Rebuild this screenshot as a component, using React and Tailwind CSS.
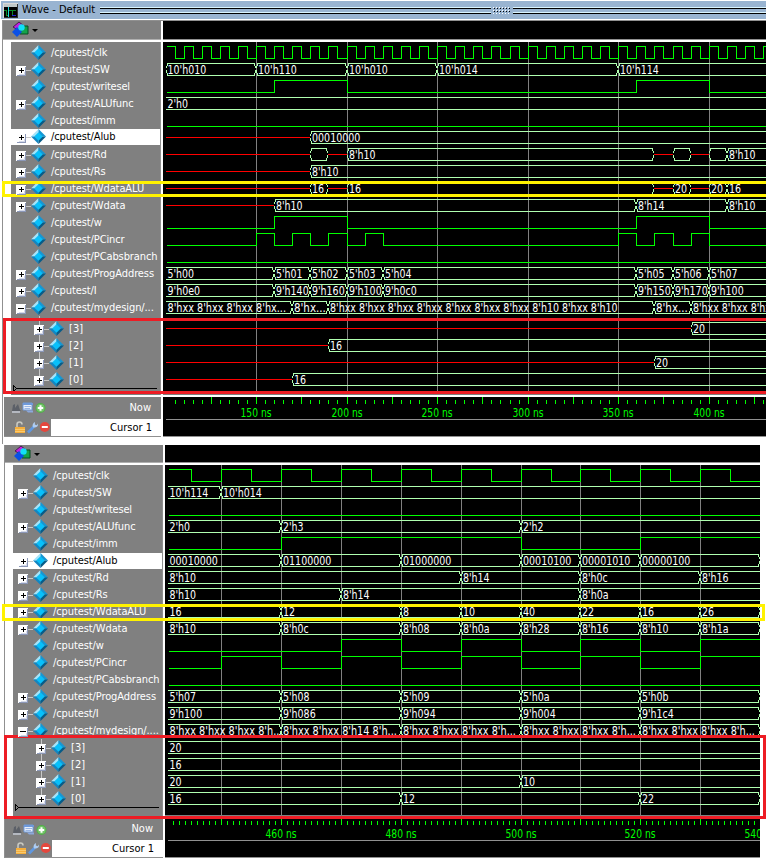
import React from "react";

const FONT = "font-['DejaVu_Sans_Condensed','DejaVu_Sans',sans-serif]";
const BUS = "#b0ffb0";
const GREEN = "#00ff00";

const CHAR_WIDTHS = { "'": 2.4, " ": 3.2, ".": 3.9, x: 5.6, c: 5.2 };
const textWidth = (s) => [...s].reduce((w, ch) => w + (CHAR_WIDTHS[ch] ?? 6.05), 0);

const XX = "8'hxx ";

// Segment kinds: bit levels [time, 0|1]; bus values [time, label], "x" = unknown, "" = no label.
const FIRST = {
  x: (t) => Math.round(256 + (t - 150) * 1.811),
  left: 166, right: 766, start: 100, end: 440,
  grid: [150, 200, 250, 300, 350, 400],
  rows: [
    { y: 52, clk: true },
    { y: 69, bus: [[100.5, "10'h010"], [150, "10'h110"], [200, "10'h010"], [250, "10'h014"], [350, "10'h114"]] },
    { y: 86, bit: [[100, 0], [160, 1], [200, 0], [360, 1], [400, 0]] },
    { y: 103, bus: [[100, "2'h0"]] },
    { y: 120, bit: [[100, 0]] },
    { y: 137, bus: [[100, "x"], [180, "00010000"]] },
    { y: 154, bus: [[100, "x"], [180, ""], [190, "x"], [200, "8'h10"], [370, "x"], [380, ""], [390, "x"], [400, ""], [410, "8'h10"]] },
    { y: 171, bus: [[100, "x"], [180, "8'h10"]] },
    { y: 188, bus: [[100, "x"], [180, "16"], [190, "x"], [200, "16"], [370, "x"], [380, "20"], [390, "x"], [400, "20"], [410, "16"]] },
    { y: 205, bus: [[100, "x"], [160, "8'h10"], [360, "8'h14"], [410, "8'h10"]] },
    { y: 222, bit: [[100, 0], [160, 1], [200, 0], [360, 1], [400, 0]] },
    { y: 239, bit: [[100, 0], [150, 1], [160, 0], [170, 1], [180, 0], [190, 1], [200, 0], [210, 1], [220, 0], [350, 1], [360, 0], [370, 1], [380, 0], [390, 1], [400, 0]] },
    { y: 256, bit: [[100, 0]] },
    { y: 273, bus: [[100, "5'h00"], [160, "5'h01"], [180, "5'h02"], [200, "5'h03"], [220, "5'h04"], [360, "5'h05"], [380, "5'h06"], [400, "5'h07"]] },
    { y: 290, bus: [[100, "9'h0e0"], [160, "9'h140"], [180, "9'h160"], [200, "9'h100"], [220, "9'h0c0"], [360, "9'h150"], [380, "9'h170"], [400, "9'h100"]] },
    { y: 307, bus: [[100, XX.repeat(3) + "8'hx..."], [170, "8'hx..."], [190, XX.repeat(7) + "8'h10 8'hxx 8'h10"], [370, "8'hx..."], [390, XX.repeat(3)]] },
    { y: 328, bus: [[100, "x"], [390, "20"]] },
    { y: 345, bus: [[100, "x"], [190, "16"]] },
    { y: 362, bus: [[100, "x"], [370, "20"]] },
    { y: 379, bus: [[100, "x"], [170, "16"]] },
  ],
};

const SECOND = {
  x: (t) => Math.round(281.2 + (t - 460) * 5.985),
  left: 168, right: 760, start: 441, end: 540,
  grid: [450, 460, 470, 480, 490, 500, 510, 520, 530],
  rows: [
    { y: 475, clk: true },
    { y: 492, bus: [[441, "10'h114"], [450, "10'h014"]] },
    { y: 509, bit: [[441, 0]] },
    { y: 526, bus: [[441, "2'h0"], [460, "2'h3"], [500, "2'h2"]] },
    { y: 543, bit: [[441, 0], [460, 1], [500, 0], [520, 1]] },
    { y: 560, closed: true, bus: [[441, "00010000"], [460, "01100000"], [480, "01000000"], [500, "00010100"], [510, "00001010"], [520, "00000100"]] },
    { y: 577, bus: [[441, "8'h10"], [490, "8'h14"], [510, "8'h0c"], [530, "8'h16"]] },
    { y: 594, bus: [[441, "8'h10"], [470, "8'h14"], [510, "8'h0a"]] },
    { y: 611, closed: true, bus: [[441, "16"], [460, "12"], [480, "8"], [490, "10"], [500, "40"], [510, "22"], [520, "16"], [530, "26"]] },
    { y: 628, closed: true, bus: [[441, "8'h10"], [460, "8'h0c"], [480, "8'h08"], [490, "8'h0a"], [500, "8'h28"], [510, "8'h16"], [520, "8'h10"], [530, "8'h1a"]] },
    { y: 645, bit: [[441, 0], [470, 1], [480, 0], [490, 1], [500, 0], [510, 1], [520, 0], [530, 1]] },
    { y: 662, bit: [[441, 0], [450, 1], [460, 0], [470, 1], [480, 0], [490, 1], [500, 0], [510, 1], [520, 0], [530, 1]] },
    { y: 679, bit: [[441, 0]] },
    { y: 696, closed: true, bus: [[441, "5'h07"], [460, "5'h08"], [480, "5'h09"], [500, "5'h0a"], [520, "5'h0b"]] },
    { y: 713, closed: true, bus: [[441, "9'h100"], [460, "9'h086"], [480, "9'h094"], [500, "9'h004"], [520, "9'h1c4"]] },
    { y: 730, closed: true, bus: [[441, XX.repeat(3) + "8'h..."], [460, XX.repeat(2) + "8'h14 8'h..."], [480, XX.repeat(3) + "8'h..."], [500, XX.repeat(3) + "8'h..."], [520, XX.repeat(3) + "8'h..."]] },
    { y: 747, bus: [[441, "20"]] },
    { y: 764, bus: [[441, "16"]] },
    { y: 781, bus: [[441, "20"], [500, "10"]] },
    { y: 798, closed: true, bus: [[441, "16"], [480, "12"], [520, "22"]] },
  ],
};

function bitPath(cfg, y, levels) {
  let d = "";
  levels.forEach(([t, v], i) => {
    const px = i === 0 ? cfg.left + 1 : cfg.x(t) + 0.5;
    const py = y + 0.5 + (v ? -6 : 6);
    d += i === 0 ? `M${px} ${py}` : `H${px}V${py}`;
  });
  return d + `H${cfg.right}`;
}

function clockLevels(cfg) {
  const out = [];
  for (let t = Math.floor(cfg.start / 10) * 10; t <= cfg.end; t += 10) {
    out.push([t, 1], [t + 5, 0]);
  }
  return out.filter(([t]) => cfg.x(t) < cfg.right);
}

function BusRow({ cfg, row }) {
  const { y, bus, closed } = row;
  return bus.map(([t, v], i) => {
    const first = i === 0 && Number.isInteger(t);
    const a = i === 0 ? cfg.left : cfg.x(t);
    const last = i === bus.length - 1;
    const b = last ? cfg.right : cfg.x(bus[i + 1][0]);
    if (v === "x") return <path key={i} d={`M${a} ${y + 0.5}H${b}`} stroke="#ff0000" fill="none" />;
    const l = first ? a : a + 1;
    const r = last && !closed ? b : b - 1;
    let d = `M${l} ${y - 5.5}H${r}M${l} ${y + 6.5}H${r}`;
    if (!first) d += `M${a + 1.5} ${y - 6}V${y - 3}M${a + 0.5} ${y - 3}V${y - 1}M${a + 0.5} ${y + 1}V${y + 4}M${a + 1.5} ${y + 4}V${y + 7}`;
    if (!last || closed) d += `M${b - 1.5} ${y - 6}V${y - 3}M${b - 0.5} ${y - 3}V${y - 1}M${b - 0.5} ${y + 1}V${y + 4}M${b - 1.5} ${y + 4}V${y + 7}`;
    const s = v.trim();
    return (
      <g key={i}>
        <path d={d} stroke={BUS} fill="none" />
        {s && (
          <text x={a + (i === 0 ? 1.5 : 2)} y={y + 5} fill="#fff" fontSize="11.5" textLength={textWidth(s)} lengthAdjust="spacingAndGlyphs">
            {s}
          </text>
        )}
      </g>
    );
  });
}

function Waves({ cfg, x, y, w, h }) {
  return (
    <svg className={`block shrink-0 bg-black ${FONT}`} width={w} height={h} viewBox={`${x} ${y} ${w} ${h}`}>
      <g shapeRendering="crispEdges">
        {cfg.grid.map((t) => (
          <path key={t} d={`M${cfg.x(t) + 0.5} ${y}V${y + h - 1}`} stroke="#808080" />
        ))}
        {cfg.rows.map((row) =>
          row.bus ? (
            <BusRow key={row.y} cfg={cfg} row={row} />
          ) : (
            <path key={row.y} d={bitPath(cfg, row.y, row.clk ? clockLevels(cfg) : row.bit)} stroke={GREEN} fill="none" />
          )
        )}
        <path d={`M${x} ${y + h - 0.5}H${x + w}`} stroke="#808080" />
      </g>
    </svg>
  );
}

function Axis({ cfg, x, y, w, h, minor, major, from, labels, cursorY, base }) {
  const ticks = [];
  for (let t = from; cfg.x(t) < cfg.right; t += minor) ticks.push(t);
  return (
    <svg className={`block shrink-0 bg-black ${FONT}`} width={w} height={h} viewBox={`${x} ${y} ${w} ${h}`}>
      <g shapeRendering="crispEdges">
        {ticks.map((t) => (
          <path key={t} d={`M${cfg.x(t) + 0.5} ${t % major === 0 ? y : base - 17}V${base - 13}`} stroke={GREEN} />
        ))}
        <path d={`M${cfg.left} ${cursorY + 0.5}H${cfg.right}M${x} ${y + h - 0.5}H${x + w}`} stroke="#909090" />
      </g>
      {labels.map((t) => (
        <text key={t} x={cfg.x(t) - 15.5} y={base} fill={GREEN} fontSize="11.5" textLength="31" lengthAdjust="spacingAndGlyphs">
          {t} ns
        </text>
      ))}
    </svg>
  );
}

function Diamond({ offset }) {
  return (
    <svg className={`block size-[15px] shrink-0 self-start ${offset}`} viewBox="0 0 15 15">
      <path d="M7.5 0L0 7.5H7.5Z" fill="#a5e4fa" />
      <path d="M7.5 0L15 7.5H7.5Z" fill="#1597d3" />
      <path d="M0 7.5L7.5 15V7.5Z" fill="#1286c2" />
      <path d="M15 7.5L7.5 15V7.5Z" fill="#075c88" />
      <path d="M7.5 3.2L11.8 7.5L7.5 11.8L3.2 7.5Z" fill="#08c0fa" />
    </svg>
  );
}

function Toggle({ open }) {
  return (
    <div className="relative z-10 flex shrink-0 items-start">
      <svg className="block size-[10px] shrink-0" viewBox="0 0 10 10" shapeRendering="crispEdges">
        <path d="M0 0H10V10H0Z" fill="#fff" />
        <path d="M9 1H10V10H1V9H9Z" fill="#8c98b8" />
        <path d="M8 6H9V9H3V8H8Z" fill="#d5daea" />
        <path d={open ? "M2 4H8V5H2Z" : "M3 4H8V5H3ZM5 2H6V7H5Z"} fill="#000" />
      </svg>
      <div className="mt-[4px] h-px w-[5px] shrink-0 bg-[#c8c8c8]" />
    </div>
  );
}

const SIGNALS = [
  ["/cputest/clk", false],
  ["/cputest/SW", true],
  ["/cputest/writesel", false, "tracking-[-0.22px]"],
  ["/cputest/ALUfunc", true],
  ["/cputest/imm", false],
  ["/cputest/Alub", true],
  ["/cputest/Rd", true],
  ["/cputest/Rs", true],
  ["/cputest/WdataALU", true],
  ["/cputest/Wdata", true],
  ["/cputest/w", false],
  ["/cputest/PCincr", false],
  ["/cputest/PCabsbranch", false],
  ["/cputest/ProgAddress", true],
  ["/cputest/I", true],
];

function NameRow({ label, expandable, open, selected, selectedOffset, tracking = "tracking-[-0.1px]" }) {
  const tone = selected ? `h-4 bg-white text-black ${selectedOffset}` : "h-[17px] text-white";
  return (
    <div className="flex h-[17px] shrink-0 flex-col">
      <div className={`flex shrink-0 items-center ${tone}`}>
        <div className={`flex w-5 shrink-0 items-start self-start pl-[5px] ${selected ? "pt-[4px]" : "pt-[5px]"}`}>
          {expandable && <Toggle open={open} />}
        </div>
        <Diamond offset={selected ? "mt-0" : "mt-px"} />
        <span className={`ml-[5px] whitespace-pre text-[11px] leading-4 ${tracking}`}>{label}</span>
      </div>
    </div>
  );
}

function Names({ dots, childPad, selectedOffset }) {
  return (
    <div className={`flex w-[149px] shrink-0 flex-col overflow-hidden bg-[#808080] pt-[2px] ${FONT}`}>
      {SIGNALS.map(([label, expandable, tracking]) => (
        <NameRow
          key={label}
          label={label}
          expandable={expandable}
          tracking={tracking}
          selected={label === "/cputest/Alub"}
          selectedOffset={selectedOffset}
        />
      ))}
      <NameRow label={"/cputest/mydesign/" + dots} expandable open />
      <div className={`relative ${childPad}`}>
        <div className="absolute left-[28px] top-0 bottom-2 w-px bg-[#c8c8c8]" />
        {[3, 2, 1, 0].map((n) => (
          <div key={n} className="flex h-[17px] items-center pl-[23px] text-white">
            <div className="self-start pt-[5px]">
              <Toggle />
            </div>
            <Diamond offset="mt-px" />
            <span className="ml-[5px] text-[11px] leading-4">[{n}]</span>
          </div>
        ))}
      </div>
      <svg className="-mt-[3px] block shrink-0" width="149" height="7" viewBox="0 0 149 7" shapeRendering="crispEdges">
        <path d="M4 3.5H146" stroke="#000" />
        <path d="M2.5 0.5V6.5L5.5 3.5Z" fill="#808080" stroke="#000" />
      </svg>
    </div>
  );
}

function ToolIcon() {
  return (
    <svg className="block" width="28" height="17" viewBox="0 0 28 17">
      <path d="M1 6L7 1L12 5L6 9Z" fill="#c21fe0" stroke="#43204c" strokeWidth="1" />
      <path d="M10 5H16V13H8Z" fill="#14a34a" stroke="#064f22" strokeWidth="1" />
      <path d="M5 6L10 11L5 16L0 11Z" fill="#0a50e6" />
      <circle cx="9.5" cy="6.5" r="3.2" fill="#12dff8" />
      <path d="M20 8H26L23 11Z" fill="#000" />
    </svg>
  );
}

function SmallIcons() {
  return (
    <svg className="block shrink-0" width="35" height="12" viewBox="0 0 35 12">
      <path d="M1 9L2 3L4 2L4 6L7 2L9 8L10 9Z" fill="#5c6068" />
      <path d="M1 9H9V11H1Z" fill="#b4b8c0" />
      <path d="M12 1H21V8H12Z" fill="#e8effa" stroke="#6f9adb" />
      <path d="M12 2H22" stroke="#6f9adb" strokeWidth="2" />
      <path d="M13.5 4.5H20M13.5 6.5H19" stroke="#9ab6e4" strokeWidth="1" />
      <path d="M15 8.5H22V10.5H17Z" fill="#8ca8dc" />
      <circle cx="29.5" cy="6" r="5" fill="#52ad49" />
      <circle cx="29.5" cy="6" r="4" fill="#74c46a" />
      <path d="M26.8 6H32.2M29.5 3.3V8.7" stroke="#fff" strokeWidth="2" />
    </svg>
  );
}

function EditIcons() {
  return (
    <svg className="block shrink-0" width="37" height="13" viewBox="0 0 37 13">
      <path d="M3 6V3.5Q3 1 5.5 1Q8 1 8 3.5" fill="none" stroke="#c8c8c0" strokeWidth="1.6" />
      <path d="M1 6H11V12H1Z" fill="#f5ae3c" />
      <path d="M1 8.5H11M1 10.5H11" stroke="#fbd07a" strokeWidth=".8" />
      <path d="M14 11.5L20 5.5" stroke="#5f97df" strokeWidth="2.6" />
      <path d="M19 6.5Q17.5 3 21 1L20.8 3.5L22.8 4.2L24 2.6Q24.5 7 19 6.5Z" fill="#aecdf3" />
      <circle cx="30.8" cy="6" r="5" fill="#e4473d" />
      <path d="M27.8 6H33.8" stroke="#fff" strokeWidth="2" />
    </svg>
  );
}

function CursorPanel({ width, top, bottom }) {
  return (
    <div className={`flex shrink-0 flex-col border-b border-[#909090] bg-[#808080] text-[11px] ${width} ${FONT}`}>
      <div className={`flex items-center justify-between pl-[7px] pr-[10px] text-white ${top}`}>
        <SmallIcons />
        <span>Now</span>
      </div>
      <div className={`flex ${bottom}`}>
        <div className="flex w-[47px] shrink-0 items-center pl-[10px]">
          <EditIcons />
        </div>
        <div className="flex grow items-center justify-end bg-white pr-[9px] text-black">
          <span className="pt-px leading-4">Cursor 1</span>
        </div>
      </div>
    </div>
  );
}

function TitleBar() {
  return (
    <div className={`ml-px flex h-[19px] shrink-0 items-center border-t border-white bg-[#99b4d1] ${FONT}`}>
      <svg className="ml-[2px] block" width="15" height="15" viewBox="0 0 15 15" shapeRendering="crispEdges">
        <path d="M0 0H15V15H0Z" fill="#303030" />
        <path d="M0 0H15V1H1V15H0Z" fill="#d8d8d8" />
        <path d="M1 1H14V4H1Z" fill="#c0c8c8" />
        <path d="M1 4H14V14H1Z" fill="#000" />
        <path d="M1 7.5H3.5V12.5H6M9 12.5V7.5H13" fill="none" stroke="#0a8a28" />
        <path d="M6 7.5H12" stroke="#0a8a28" />
        <path d="M5.5 4V14" stroke="#18d8d8" />
        <path d="M9 12.5H13" stroke="#2020d0" />
      </svg>
      <span className="ml-[4px] w-[78px] shrink-0 whitespace-nowrap text-[11px] leading-4 text-black">Wave - Default</span>
      <svg className="block" width="666" height="9" viewBox="100 6 666 9" shapeRendering="crispEdges">
        <path d="M100 7H491M513 7H766M100 12H491M513 12H766" stroke="#d9f4ff" />
        <path d="M100 8.5H491M513 8.5H766M100 13.5H491M513 13.5H766" stroke="#000" />
        <path d="M493 7.5H511M493 10.5H511M493 13.5H511" stroke="#fff" strokeDasharray="1 2" />
        <path d="M494 8.5H511M494 11.5H511" stroke="#000" strokeDasharray="1 2" />
      </svg>
    </div>
  );
}

export default function App() {
  return (
    <div className="relative flex h-[858px] w-[766px] flex-col overflow-hidden bg-white">
      <div className="flex h-[444px] shrink-0 flex-col">
        <TitleBar />
        <div className="mt-px ml-[2px] flex grow flex-col border-l border-t border-[#909090]">
          <div className="flex h-[19px] shrink-0">
            <div className="w-[158px] shrink-0 border-b border-[#b0b0b0] bg-[#808080] pl-[9px]">
              <ToolIcon />
            </div>
            <div className="ml-[2px] grow border-b border-[#909090] bg-black" />
          </div>
          <div className="mt-[2px] flex h-[353px] shrink-0 pl-[8px]">
            <Names dots="..." childPad="pt-[4px]" selectedOffset="mt-0" />
            <div className="mr-[2px] w-px shrink-0 bg-[#909090]" />
            <Waves cfg={FIRST} x={163} y={42} w={603} h={353} />
          </div>
          <div className="mt-[2px] flex h-10 shrink-0 pl-px">
            <CursorPanel width="w-[157px]" top="h-[22px]" bottom="h-[17px]" />
            <div className="ml-[2px]">
              <Axis cfg={FIRST} x={163} y={397} w={603} h={40} from={105} minor={5} major={25} labels={[150, 200, 250, 300, 350, 400]} cursorY={419} base={417} />
            </div>
          </div>
        </div>
      </div>

      <div className="ml-[4px] mt-px flex h-[413px] shrink-0 flex-col border-l border-[#909090]">
        <div className="flex h-[18px] shrink-0">
          <div className="w-[158px] shrink-0 border-b border-[#b0b0b0] bg-[#808080] pl-[9px]">
            <ToolIcon />
          </div>
          <div className="ml-[2px] w-[595px] border-b border-[#909090] bg-black" />
        </div>
        <div className="mt-[2px] flex h-[351px] shrink-0 pl-[8px]">
          <Names dots="...." childPad="" selectedOffset="mt-px" />
          <div className="mr-[2px] w-px shrink-0 bg-[#909090]" />
          <Waves cfg={SECOND} x={165} y={465} w={595} h={351} />
        </div>
        <div className="mt-[3px] flex h-[39px] shrink-0">
          <CursorPanel width="w-[158px]" top="h-[21px]" bottom="h-[17px]" />
          <div className="ml-[2px]">
            <Axis cfg={SECOND} x={165} y={819} w={595} h={39} from={442} minor={1} major={10} labels={[460, 480, 500, 520, 540]} cursorY={840} base={838} />
          </div>
        </div>
      </div>

      <div className="absolute top-[181px] left-[2px] h-4 w-[770px] border-3 border-[#fff200]" />
      <div className="absolute top-[318px] left-[3px] h-[76px] w-[770px] border-3 border-[#ed1c24]" />
      <div className="absolute top-[604px] left-[2px] h-[17px] w-[763px] border-3 border-[#fff200]" />
      <div className="absolute top-[735px] left-[4px] h-[84px] w-[762px] border-3 border-[#ed1c24]" />
    </div>
  );
}
